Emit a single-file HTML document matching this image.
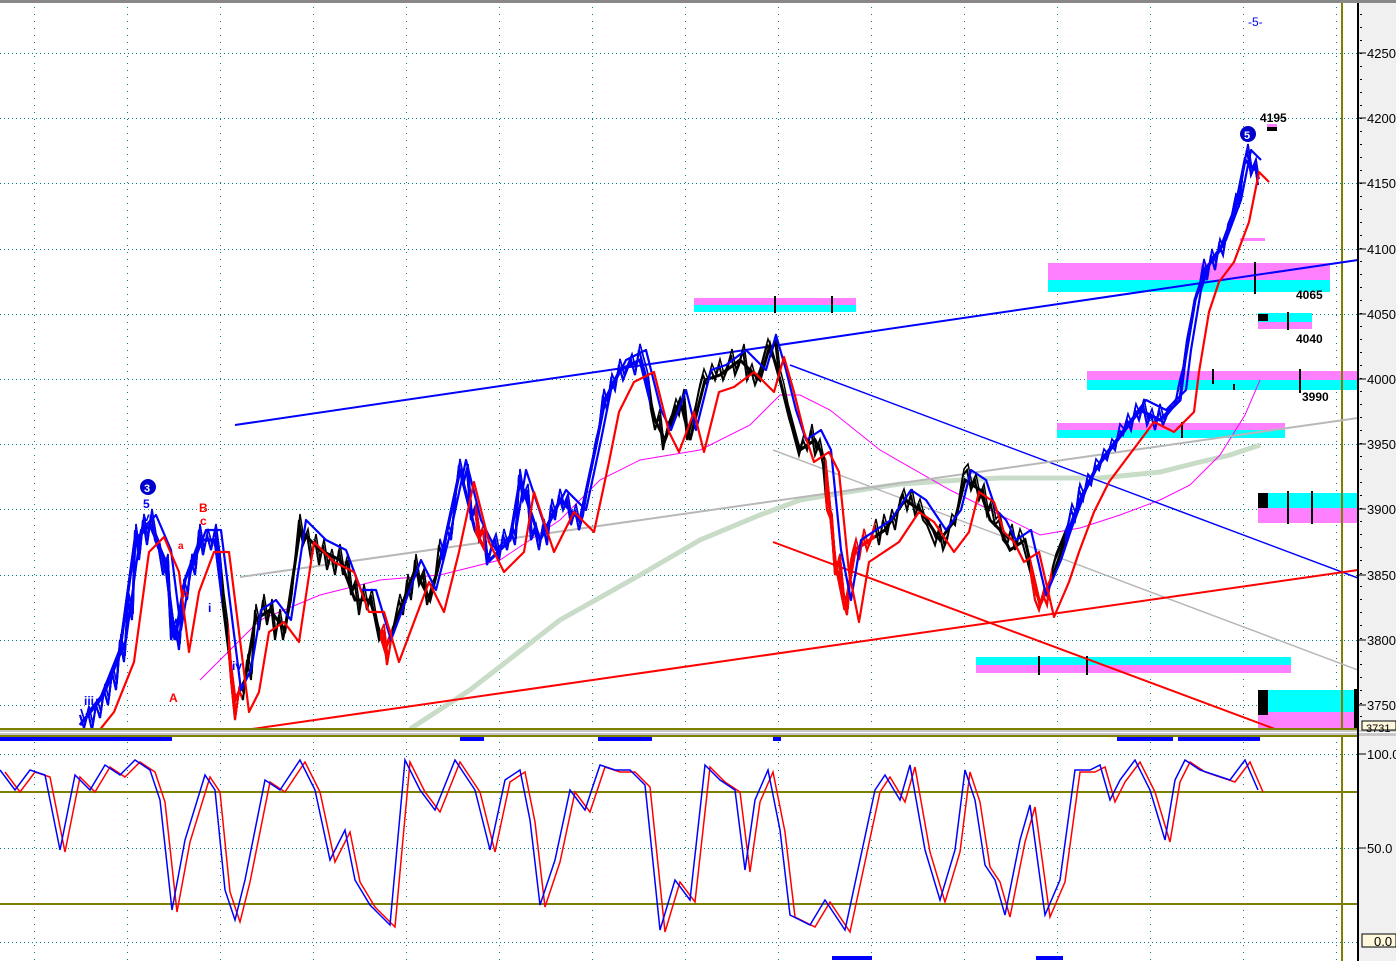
<!DOCTYPE html>
<html><head><meta charset="utf-8"><style>
html,body{margin:0;padding:0;background:#fff;width:1396px;height:961px;overflow:hidden}
svg{display:block}
text{font-family:"Liberation Sans",sans-serif}
</style></head><body>
<svg width="1396" height="961" xmlns="http://www.w3.org/2000/svg" xmlns:xlink="http://www.w3.org/1999/xlink">
<defs>
<pattern id="vg" x="34" y="0" width="93" height="961" patternUnits="userSpaceOnUse">
<line x1="0.5" y1="0" x2="0.5" y2="961" stroke="#008080" stroke-width="1" stroke-dasharray="1,6"/>
</pattern>
<pattern id="tk" x="0" y="1" width="20" height="13" patternUnits="userSpaceOnUse">
<rect x="0" y="0" width="3" height="1" fill="#000"/>
</pattern>
<clipPath id="cb"><rect x="0" y="0" width="222" height="730"/><rect x="440" y="0" width="210" height="730"/><rect x="1065" y="0" width="200" height="730"/></clipPath>
<clipPath id="cr"><rect x="825" y="0" width="50" height="730"/><rect x="1030" y="0" width="22" height="730"/><rect x="380" y="0" width="12" height="730"/><rect x="228" y="0" width="14" height="730"/><rect x="475" y="0" width="10" height="730"/></clipPath>
<clipPath id="cm"><rect x="0" y="3" width="1358" height="725"/></clipPath>
<polyline id="pp" fill="none" points="80,725 100,700 120,650 135,540 150,525 165,560 175,640 185,580 200,540 215,540 225,620 235,700 245,680 255,620 270,610 285,630 300,530 320,550 340,560 355,600 370,600 385,650 400,610 415,570 430,600 445,540 460,470 475,530 490,560 510,540 520,480 540,540 560,500 580,520 595,450 605,400 620,370 640,360 655,420 665,440 680,400 690,440 705,380 720,375 740,360 760,380 770,345 780,380 790,420 800,450 815,440 825,460 835,560 845,610 855,550 870,540 885,530 905,500 920,510 940,540 955,520 965,480 980,490 990,520 1000,530 1010,550 1025,540 1040,605 1055,570 1065,540 1080,500 1095,470 1110,450 1125,430 1140,410 1160,420 1180,400 1185,360 1195,300 1205,270 1220,250 1235,210 1245,160 1255,170"/>
<polyline id="pz" fill="none" points="80,715 84,728 88,712 92,730 96,705 100,718 104,690 108,705 112,672 116,690 120,640 124,662 128,600 132,620 135,530 139,560 143,520 147,545 151,515 155,540 159,550 163,575 167,560 171,640 175,625 179,650 183,585 187,600 191,560 195,575 199,530 203,555 207,535 211,550 215,530 219,560 223,600 227,630 231,680 235,720 239,690 243,700 247,660 251,680 255,610 259,630 263,600 267,625 271,605 275,640 279,615 283,640 287,620 291,600 295,560 299,520 303,545 307,535 311,560 315,540 319,565 323,545 327,570 331,555 335,575 339,550 343,575 347,560 351,595 355,585 359,615 363,590 367,610 371,595 375,620 379,640 383,630 387,665 391,640 395,620 399,600 403,615 407,580 411,600 415,560 419,585 423,575 427,605 431,590 435,580 439,545 443,560 447,530 451,540 455,500 459,465 463,485 467,470 471,520 475,510 479,540 483,530 487,565 491,550 495,540 499,560 503,535 507,550 511,530 515,545 519,475 523,500 527,490 531,540 535,530 539,550 543,525 547,545 551,505 555,520 559,495 563,510 567,500 571,525 575,510 579,530 583,515 587,490 591,470 595,445 599,430 603,395 607,410 611,380 615,390 619,365 623,380 627,370 631,360 635,375 639,350 643,365 647,380 651,410 655,430 659,415 663,450 667,430 671,420 675,405 679,415 683,395 687,440 691,425 695,410 699,390 703,375 707,385 711,370 715,380 719,365 723,380 727,370 731,355 735,375 739,365 743,350 747,380 751,370 755,385 759,375 763,360 767,345 771,355 775,340 779,375 783,390 787,410 791,425 795,440 799,455 803,440 807,450 811,430 815,455 819,445 823,465 827,510 831,520 835,575 839,560 843,600 847,615 851,560 855,545 859,560 863,535 867,550 871,540 875,525 879,545 883,520 887,535 891,515 895,530 899,505 903,495 907,510 911,495 915,515 919,505 923,520 927,525 931,535 935,545 939,530 943,550 947,540 951,520 955,525 959,500 963,475 967,470 971,490 975,480 979,500 983,490 987,515 991,505 995,525 999,520 1003,540 1007,545 1011,530 1015,550 1019,535 1023,545 1027,560 1031,575 1035,600 1039,610 1043,595 1047,605 1051,575 1055,560 1059,550 1063,540 1067,530 1071,510 1075,520 1079,490 1083,500 1087,480 1091,485 1095,465 1099,470 1103,455 1107,460 1111,445 1115,450 1119,430 1123,435 1127,420 1131,430 1135,410 1139,420 1143,405 1147,425 1151,415 1155,430 1159,410 1163,425 1167,415 1171,410 1175,405 1179,385 1183,370 1187,340 1191,320 1195,300 1199,290 1203,265 1207,280 1211,255 1215,270 1219,245 1223,255 1227,230 1231,220 1235,200 1239,205 1243,170 1247,150 1251,175 1255,165 1258,185"/>
<polyline id="st" fill="none" points="0,770 15,790 30,770 45,775 60,850 75,775 90,790 105,765 120,775 135,760 150,770 160,800 172,910 185,840 205,775 215,790 225,890 235,920 245,880 265,780 280,790 300,760 315,790 330,860 345,830 355,880 370,905 390,925 405,760 420,790 435,810 455,760 475,790 490,850 505,780 520,770 530,820 540,905 555,860 570,790 585,810 600,765 615,770 630,770 645,785 660,930 675,880 690,900 705,765 720,780 735,790 745,870 755,800 768,770 780,830 790,915 810,925 825,900 845,930 860,860 875,790 885,775 900,800 910,765 925,850 940,900 955,850 965,770 975,800 985,865 995,880 1005,915 1020,840 1030,805 1045,915 1060,880 1075,770 1090,770 1100,765 1110,800 1120,780 1135,760 1150,790 1165,840 1175,780 1185,760 1200,770 1215,775 1230,780 1245,760 1258,790"/>
</defs>
<rect x="0" y="0" width="1396" height="961" fill="#fff"/>
<rect x="0" y="0" width="1396" height="3" fill="#888"/>
<rect x="1358" y="3" width="38" height="958" fill="#f0f0f0"/>
<rect x="0" y="3" width="1358" height="958" fill="url(#vg)"/>
<g stroke="#008080" stroke-width="1" stroke-dasharray="1,3">
<line x1="0" y1="53.5" x2="1358" y2="53.5"/><line x1="0" y1="118.5" x2="1358" y2="118.5"/><line x1="0" y1="183.5" x2="1358" y2="183.5"/><line x1="0" y1="249.5" x2="1358" y2="249.5"/><line x1="0" y1="314.5" x2="1358" y2="314.5"/><line x1="0" y1="379.5" x2="1358" y2="379.5"/><line x1="0" y1="444.5" x2="1358" y2="444.5"/><line x1="0" y1="509.5" x2="1358" y2="509.5"/><line x1="0" y1="575.5" x2="1358" y2="575.5"/><line x1="0" y1="640.5" x2="1358" y2="640.5"/><line x1="0" y1="705.5" x2="1358" y2="705.5"/><line x1="0" y1="754.5" x2="1358" y2="754.5"/><line x1="0" y1="848.5" x2="1358" y2="848.5"/><line x1="0" y1="942.5" x2="1358" y2="942.5"/>
</g>
<g>
<rect x="694" y="298" width="162" height="7" fill="#ff80ff"/><rect x="694" y="305" width="162" height="7" fill="#00ffff"/>
<rect x="1048" y="263" width="282" height="17" fill="#ff80ff"/><rect x="1048" y="280" width="282" height="12" fill="#00ffff"/>
<rect x="1258" y="313" width="54" height="9" fill="#00ffff"/><rect x="1258" y="322" width="54" height="7" fill="#ff80ff"/><rect x="1258" y="314" width="10" height="7" fill="#000"/>
<rect x="1087" y="371" width="270" height="9" fill="#ff80ff"/><rect x="1087" y="380" width="270" height="10" fill="#00ffff"/>
<rect x="1057" y="423" width="228" height="7" fill="#ff80ff"/><rect x="1057" y="430" width="228" height="8" fill="#00ffff"/>
<rect x="1258" y="493" width="99" height="15" fill="#00ffff"/><rect x="1258" y="508" width="99" height="15" fill="#ff80ff"/><rect x="1258" y="493" width="10" height="15" fill="#000"/>
<rect x="976" y="657" width="315" height="8" fill="#00ffff"/><rect x="976" y="665" width="315" height="8" fill="#ff80ff"/>
<rect x="1258" y="690" width="99" height="22" fill="#00ffff"/><rect x="1258" y="712" width="99" height="17" fill="#ff80ff"/><rect x="1258" y="690" width="10" height="25" fill="#000"/>
<rect x="1240" y="238" width="25" height="3" fill="#ff80ff"/>
<rect x="1267" y="124" width="10" height="3" fill="#ff80ff"/><rect x="1267" y="127" width="10" height="4" fill="#000"/>
<g fill="#000"><rect x="774" y="296" width="2" height="17"/><rect x="831" y="296" width="2" height="17"/><rect x="1254" y="262" width="2" height="32"/><rect x="1287" y="312" width="2" height="18"/><rect x="1212" y="369" width="2" height="15"/><rect x="1299" y="369" width="2" height="24"/><rect x="1181" y="422" width="2" height="16"/><rect x="1287" y="491" width="2" height="33"/><rect x="1311" y="491" width="2" height="33"/><rect x="1038" y="656" width="2" height="19"/><rect x="1086" y="656" width="2" height="19"/><rect x="1354" y="689" width="3" height="40"/><rect x="1233" y="384" width="2" height="6"/></g>
</g>
<line x1="1342" y1="3" x2="1342" y2="961" stroke="#808000" stroke-width="2"/>
<g fill="none" clip-path="url(#cm)">
<polyline stroke="#c8dcc8" stroke-width="5" points="410,729 470,690 560,620 640,575 700,540 760,515 800,500 860,490 900,484 960,480 1000,478 1060,478 1100,478 1160,472 1200,462 1230,455 1260,445"/>
<polyline stroke="#ff00ff" stroke-width="1" points="200,680 230,650 260,620 320,595 380,580 440,575 500,560 560,520 600,480 640,460 700,450 750,425 780,395 800,395 830,410 880,450 950,490 1000,515 1040,535 1080,528 1120,515 1160,500 1190,485 1220,455 1245,415 1260,380"/>
<line x1="235" y1="425" x2="1358" y2="260" stroke="#0000ff" stroke-width="2"/>
<line x1="790" y1="365" x2="1358" y2="578" stroke="#0000ff" stroke-width="1.5"/>
<line x1="240" y1="577" x2="1358" y2="418" stroke="#b8b8b8" stroke-width="2"/>
<line x1="773" y1="450" x2="1358" y2="670" stroke="#b8b8b8" stroke-width="1.5"/>
<line x1="245" y1="730" x2="1358" y2="570" stroke="#ff0000" stroke-width="2"/>
<line x1="773" y1="542" x2="1275" y2="729" stroke="#ff0000" stroke-width="2"/>
<g stroke="#000"><use xlink:href="#pz" stroke-width="2"/><use xlink:href="#pp" stroke-width="3"/><use xlink:href="#pz" stroke-width="1.5" transform="translate(1,-6)"/></g>
<g stroke="#0000ff" clip-path="url(#cb)"><use xlink:href="#pz" stroke-width="2"/><use xlink:href="#pp" stroke-width="3"/><use xlink:href="#pz" stroke-width="1.5" transform="translate(1,-6)"/></g>
<g stroke="#ff0000" clip-path="url(#cr)"><use xlink:href="#pz" stroke-width="2"/><use xlink:href="#pp" stroke-width="3"/><use xlink:href="#pz" stroke-width="1.5" transform="translate(1,-6)"/></g>
<use xlink:href="#pp" stroke="#0000ff" stroke-width="2.2" transform="translate(6,-10)" stroke-linejoin="round"/>
<use xlink:href="#pp" stroke="#ff0000" stroke-width="2.2" transform="translate(14,12)" stroke-linejoin="round"/>
</g>
<rect x="0" y="728" width="1358" height="2" fill="#808000"/>
<rect x="0" y="730" width="1396" height="6" fill="#c8c8c8"/>
<rect x="0" y="732" width="1396" height="1" fill="#fff"/>
<rect x="0" y="735" width="1358" height="2" fill="#808000"/>
<g fill="#0000ff">
<rect x="0" y="737" width="172" height="4"/><rect x="460" y="737" width="24" height="4"/><rect x="598" y="737" width="54" height="4"/><rect x="773" y="737" width="8" height="4"/><rect x="1117" y="737" width="56" height="4"/><rect x="1178" y="737" width="82" height="4"/>
<rect x="832" y="956" width="40" height="4"/><rect x="1036" y="956" width="27" height="4"/>
</g>
<line x1="0" y1="792" x2="1358" y2="792" stroke="#808000" stroke-width="2"/>
<line x1="0" y1="904" x2="1358" y2="904" stroke="#808000" stroke-width="2"/>
<use xlink:href="#st" stroke="#ff0000" stroke-width="1.5" transform="translate(5,2)"/>
<use xlink:href="#st" stroke="#0000ff" stroke-width="1.5"/>
<line x1="1358" y1="3" x2="1358" y2="961" stroke="#000" stroke-width="2"/>
<rect x="1358" y="5" width="4" height="722" fill="url(#tk)"/>
<g stroke="#000"><line x1="1358" y1="53" x2="1366" y2="53"/><line x1="1358" y1="118" x2="1366" y2="118"/><line x1="1358" y1="183" x2="1366" y2="183"/><line x1="1358" y1="249" x2="1366" y2="249"/><line x1="1358" y1="314" x2="1366" y2="314"/><line x1="1358" y1="379" x2="1366" y2="379"/><line x1="1358" y1="444" x2="1366" y2="444"/><line x1="1358" y1="509" x2="1366" y2="509"/><line x1="1358" y1="575" x2="1366" y2="575"/><line x1="1358" y1="640" x2="1366" y2="640"/><line x1="1358" y1="705" x2="1366" y2="705"/><line x1="1358" y1="754" x2="1366" y2="754"/><line x1="1358" y1="848" x2="1366" y2="848"/></g>
<g font-size="13" fill="#000">
<text x="1367" y="58">4250</text><text x="1367" y="123">4200</text><text x="1367" y="188">4150</text><text x="1367" y="254">4100</text><text x="1367" y="319">4050</text><text x="1367" y="384">4000</text><text x="1367" y="449">3950</text><text x="1367" y="514">3900</text><text x="1367" y="580">3850</text><text x="1367" y="645">3800</text><text x="1367" y="710">3750</text>
<rect x="1362" y="721" width="34" height="9" fill="#fff8dc" stroke="#000"/><text x="1366" y="732" font-size="11">3731</text>
<text x="1367" y="759">100.0</text><text x="1367" y="853">50.0</text>
<rect x="1362" y="934" width="34" height="13" fill="#fff8dc" stroke="#000"/><text x="1374" y="946">0.0</text>
</g>
<g font-size="12" font-weight="bold">
<text x="1248" y="26" fill="#0000ff" font-weight="normal">-5-</text>
<text x="1260" y="122" fill="#000">4195</text>
<text x="1296" y="299" fill="#000">4065</text>
<text x="1296" y="343" fill="#000">4040</text>
<text x="1302" y="401" fill="#000">3990</text>
<circle cx="148" cy="487" r="8" fill="#0000cc"/><text x="144" y="492" fill="#fff" font-size="11">3</text>
<circle cx="1248" cy="134" r="8" fill="#0000cc"/><text x="1244" y="139" fill="#fff" font-size="11">5</text>
<text x="143" y="508" fill="#0000ff">5</text><text x="143" y="521" fill="#0000ff">v</text>
<text x="84" y="705" fill="#0000ff">iii</text>
<text x="199" y="512" fill="#ff0000">B</text><text x="200" y="525" fill="#ff0000">c</text>
<text x="178" y="549" fill="#ff0000" font-size="10">a</text>
<text x="182" y="597" fill="#ff0000" font-size="10">b</text>
<text x="169" y="702" fill="#ff0000">A</text>
<text x="208" y="612" fill="#0000ff">i</text><text x="213" y="546" fill="#0000ff" font-size="10">ii</text>
<text x="232" y="670" fill="#0000ff">iv</text>
</g>
</svg>
</body></html>
